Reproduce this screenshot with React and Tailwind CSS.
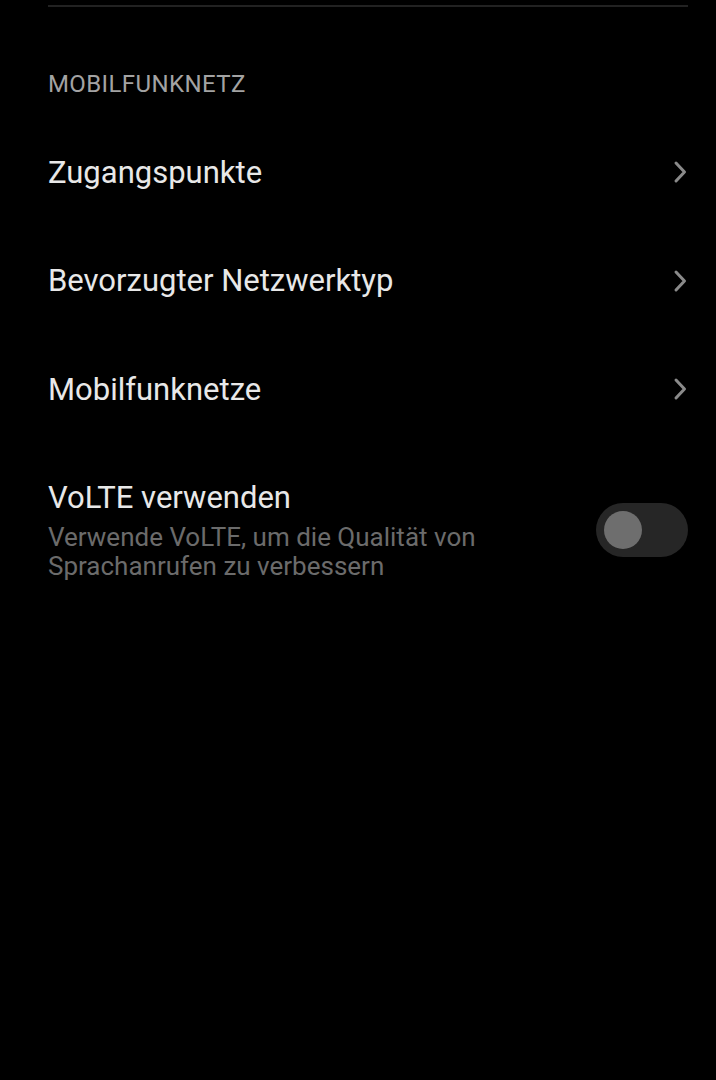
import React from "react";

const font = { fontFamily: "Roboto, 'Noto Sans', sans-serif" };

function Chevron() {
  return (
    <svg width="16" height="24" viewBox="0 0 16 24" className="shrink-0">
      <path d="M4 3 L12.5 12 L4 21" fill="none" stroke="#8a8a8a" strokeWidth="3" strokeLinecap="round" strokeLinejoin="round" />
    </svg>
  );
}

function NavRow({ label }) {
  return (
    <div className="flex items-center justify-between h-[108.5px]">
      <span className="text-[31px] text-[#e8e8e8] leading-none">{label}</span>
      <Chevron />
    </div>
  );
}

export default function App() {
  return (
    <div className="w-[716px] h-[1080px] bg-black overflow-hidden" style={font}>
      <div className="pl-12 pr-[28px]">
        <div className="h-[7px] border-b-2 border-[#222222]" />
        <div className="pt-[65px] pb-[22px] text-[24px] tracking-[0.4px] text-[#a3a3a3] leading-none">
          MOBILFUNKNETZ
        </div>
        <NavRow label="Zugangspunkte" />
        <NavRow label="Bevorzugter Netzwerktyp" />
        <NavRow label="Mobilfunknetze" />
        <div className="flex items-center justify-between pt-[36px]">
          <div className="flex flex-col">
            <span className="text-[31px] text-[#e8e8e8] leading-[36px]">VoLTE verwenden</span>
            <span className="text-[26px] text-[#6b6b6b] leading-[29px] mt-[7px] w-[460px]">
              Verwende VoLTE, um die Qualität von Sprachanrufen zu verbessern
            </span>
          </div>
          <div className="w-[92px] h-[54px] rounded-full bg-[#262626] flex items-center pl-[8px]">
            <div className="w-[38px] h-[38px] rounded-full bg-[#6e6e6e]" />
          </div>
        </div>
      </div>
    </div>
  );
}
